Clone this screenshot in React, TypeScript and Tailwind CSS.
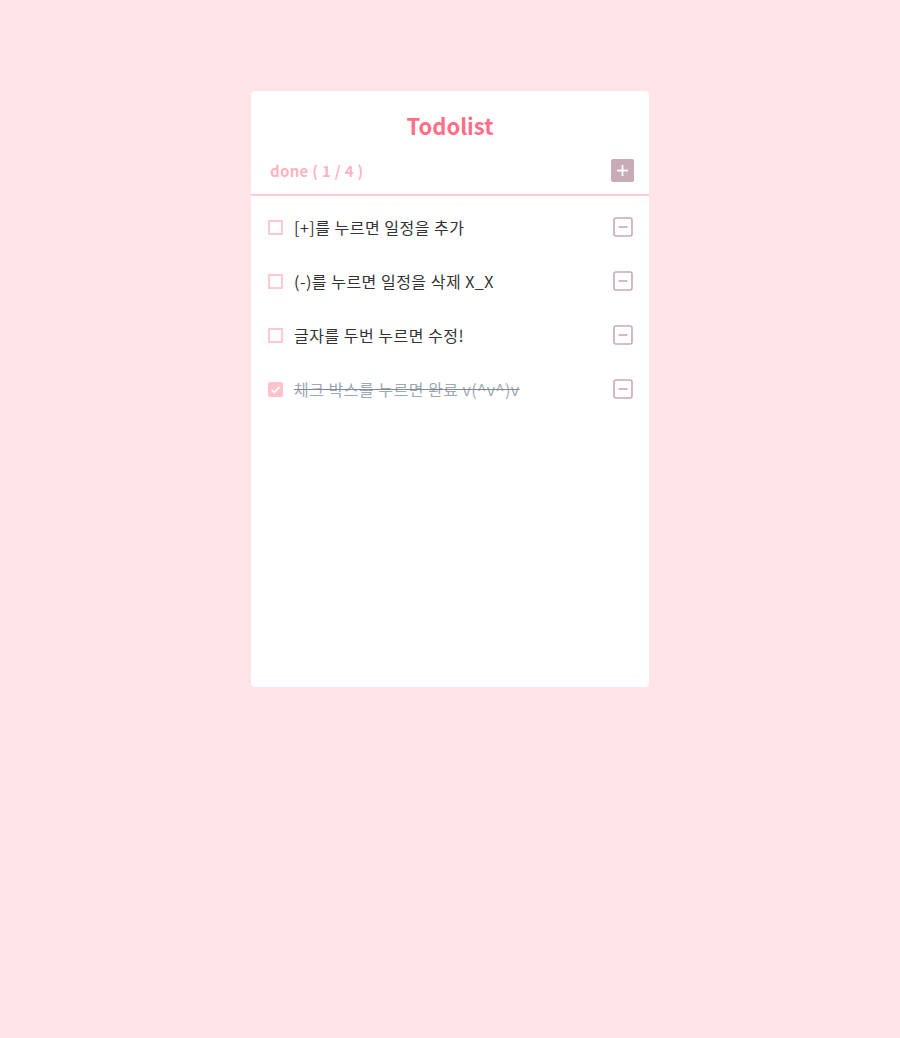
import React from "react";

const items = [
  { text: "[+]를 누르면 일정을 추가", done: false },
  { text: "(-)를 누르면 일정을 삭제 X_X", done: false },
  { text: "글자를 두번 누르면 수정!", done: false },
  { text: "체크 박스를 누르면 완료 v(^v^)v", done: true },
];

function MinusIcon() {
  return (
    <svg width="20" height="20" viewBox="0 0 20 20" fill="none">
      <rect x="1" y="1" width="18" height="18" rx="2" stroke="#c9a8b6" strokeWidth="1.6" />
      <line x1="5.5" y1="10" x2="14.5" y2="10" stroke="#c9a8b6" strokeWidth="1.6" />
    </svg>
  );
}

export default function App() {
  return (
    <div
      className="min-h-[1038px] w-full bg-[#ffe4e8] pt-[91px]"
      style={{ fontFamily: '"Noto Sans CJK KR", "Noto Sans", sans-serif' }}
    >
      <div className="mx-auto flex h-[596px] w-[398px] flex-col rounded-[4px] bg-white">
        <div className="pt-[18px] text-center text-[22px] font-bold leading-[32px] text-[#ff6f87]">
          Todolist
        </div>
        <div className="mt-[18px] flex items-center justify-between pb-[12px] pl-[19px] pr-[15px]">
          <span className="text-[15px] font-bold leading-[23px] tracking-[0.3px] text-[#ffb3c2]">done ( 1 / 4 )</span>
          <div className="flex h-[23px] w-[23px] items-center justify-center rounded-[2px] bg-[#c8aab8]">
            <svg width="13" height="13" viewBox="0 0 13 13">
              <line x1="6.5" y1="1" x2="6.5" y2="12" stroke="white" strokeWidth="1.8" />
              <line x1="1" y1="6.5" x2="12" y2="6.5" stroke="white" strokeWidth="1.8" />
            </svg>
          </div>
        </div>
        <div className="h-[2px] w-full bg-[#ffcbd5]" />
        <div className="flex flex-col pt-[4px]">
          {items.map((it, i) => (
            <div key={i} className="flex h-[54px] items-center pl-[17px] pr-[16px]">
              {it.done ? (
                <div className="flex h-[15px] w-[15px] items-center justify-center rounded-[2px] bg-[#ffc2cd]">
                  <svg width="11" height="11" viewBox="0 0 11 11" fill="none">
                    <path d="M1.5 5.8 L4.3 8.3 L9.5 2.8" stroke="white" strokeWidth="1.8" />
                  </svg>
                </div>
              ) : (
                <div className="h-[15px] w-[15px] border-2 border-[#ffc8d2]" />
              )}
              <span
                className={
                  "ml-[11px] flex-1 text-[16px] leading-[22px] tracking-[0.5px] " +
                  (it.done ? "text-[#9ca8b4] line-through decoration-[#7f8a96]" : "text-[#333333]")
                }
              >
                {it.text}
              </span>
              <MinusIcon />
            </div>
          ))}
        </div>
      </div>
    </div>
  );
}
